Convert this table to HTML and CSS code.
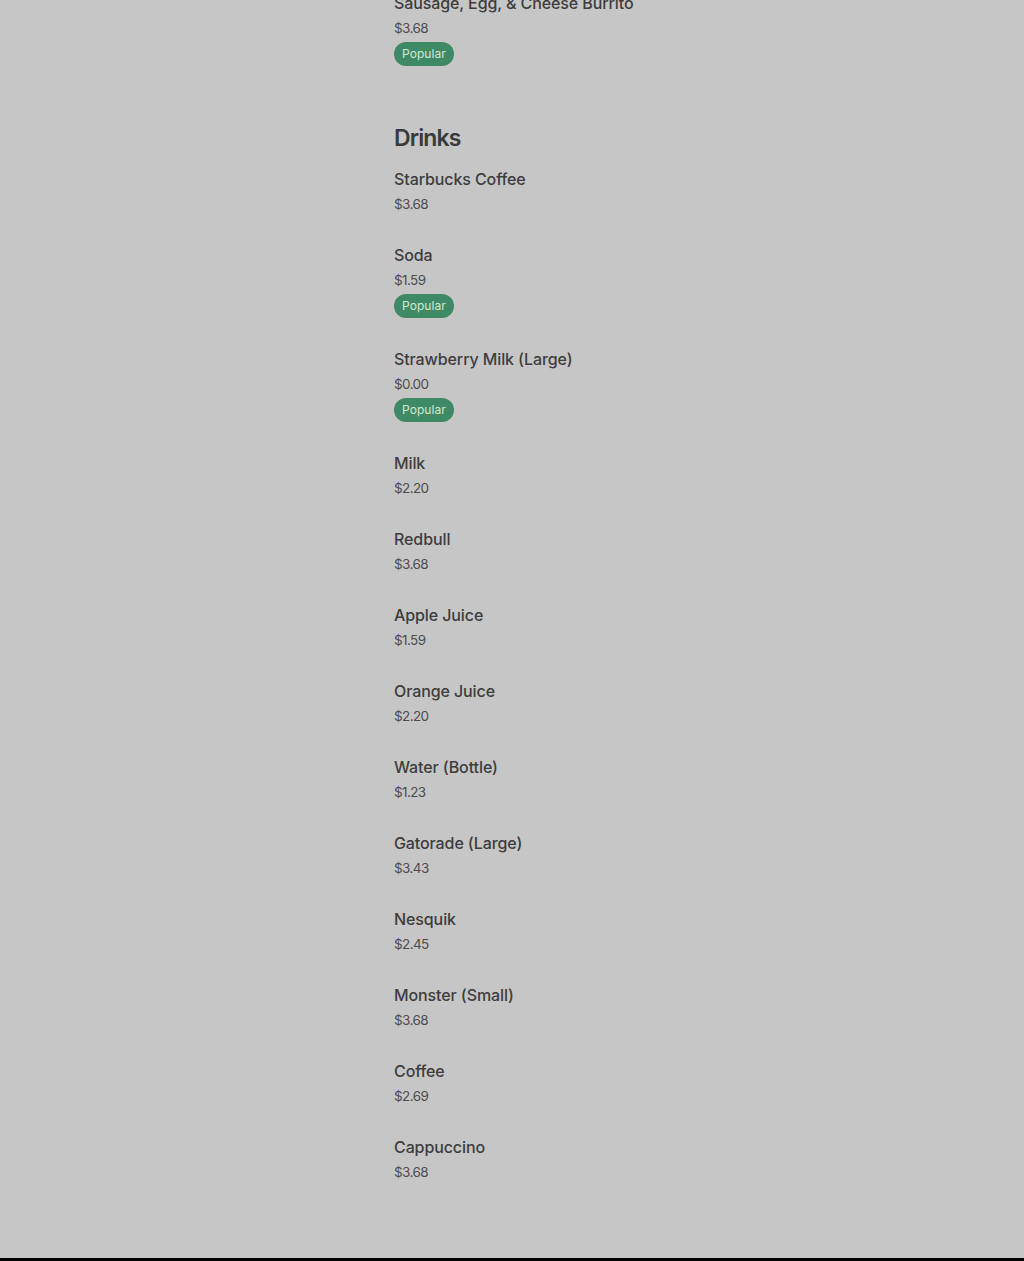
FILE: index.html
```html
<!DOCTYPE html>
<html>
<head>
<meta charset="utf-8">
<link rel="stylesheet" href="styles.css">
</head>
<body>
<div class="page">
  <main class="menu">
    <section class="section first">
      <div class="item">
        <div class="name">Sausage, Egg, &amp; Cheese Burrito</div>
        <div class="price">$3.68</div>
        <span class="badge">Popular</span>
      </div>
    </section>
    <section class="section">
      <h2 class="heading">Drinks</h2>
      <div class="item"><div class="name">Starbucks Coffee</div><div class="price">$3.68</div></div>
      <div class="item"><div class="name">Soda</div><div class="price">$1.59</div><span class="badge">Popular</span></div>
      <div class="item"><div class="name">Strawberry Milk (Large)</div><div class="price">$0.00</div><span class="badge">Popular</span></div>
      <div class="item"><div class="name">Milk</div><div class="price">$2.20</div></div>
      <div class="item"><div class="name">Redbull</div><div class="price">$3.68</div></div>
      <div class="item"><div class="name">Apple Juice</div><div class="price">$1.59</div></div>
      <div class="item"><div class="name">Orange Juice</div><div class="price">$2.20</div></div>
      <div class="item"><div class="name">Water (Bottle)</div><div class="price">$1.23</div></div>
      <div class="item"><div class="name">Gatorade (Large)</div><div class="price">$3.43</div></div>
      <div class="item"><div class="name">Nesquik</div><div class="price">$2.45</div></div>
      <div class="item"><div class="name">Monster (Small)</div><div class="price">$3.68</div></div>
      <div class="item"><div class="name">Coffee</div><div class="price">$2.69</div></div>
      <div class="item"><div class="name">Cappuccino</div><div class="price">$3.68</div></div>
    </section>
  </main>
  <footer class="footer"></footer>
</div>
</body>
</html>
```

FILE: styles.css
```css
html, body {
  margin: 0;
  padding: 0;
  background: #c6c6c6;
}
body {
  font-family: Inter, "Noto Sans", "Liberation Sans", sans-serif;
  color: #3b3b3b;
}
.page {
  display: flex;
  flex-direction: column;
}
.menu {
  margin-top: -9px;
  padding-left: 394px;
  display: flex;
  flex-direction: column;
}
.section {
  display: flex;
  flex-direction: column;
  gap: 29px;
}
.section.first {
  margin-bottom: 56px;
}
.heading {
  margin: 0 0 -16px 0;
  font-size: 23px;
  line-height: 32px;
  font-weight: 600;
  letter-spacing: -0.9px;
  color: #3a3a3a;
}
.item {
  display: flex;
  flex-direction: column;
  align-items: flex-start;
}
.name {
  font-size: 16px;
  line-height: 24px;
  font-weight: 500;
  color: #3d3d3d;
  letter-spacing: -0.1px;
}
.price {
  margin-top: 3px;
  font-size: 13.5px;
  line-height: 20px;
  color: #4d4d4d;
  letter-spacing: -0.6px;
}
.badge {
  margin-top: 4px;
  height: 24px;
  padding: 0 8px;
  border-radius: 12px;
  background: #3f8a66;
  color: #cfe8da;
  font-size: 12px;
  line-height: 24px;
  letter-spacing: 0.05px;
  display: inline-flex;
  align-items: center;
}
.footer {
  margin-top: 76px;
  height: 3px;
  background: #000;
}
```
